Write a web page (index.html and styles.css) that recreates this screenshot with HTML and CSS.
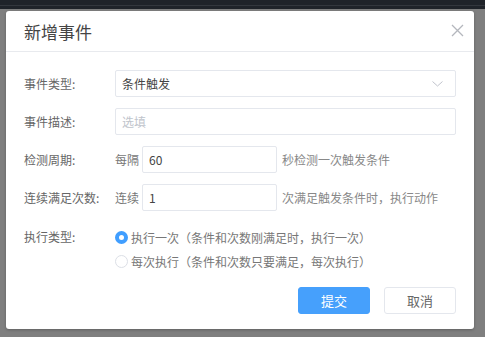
FILE: index.html
```html
<!DOCTYPE html>
<html lang="zh-CN">
<head>
    <meta charset="UTF-8">
    <title>新增事件</title>
    <link rel="stylesheet" href="styles.css">
</head>
<body>
    <div class="topbar"></div>
    <div class="dialog">
        <div class="dialog-header">
            <span class="dialog-title">新增事件</span>
            <span class="dialog-close">
                <svg width="13" height="13" viewBox="0 0 13 13"><path d="M1 1L12 12M12 1L1 12" stroke="#b4b7bd" stroke-width="1.3" fill="none"/></svg>
            </span>
        </div>
        <div class="dialog-body">
            <div class="form-row">
                <label class="form-label">事件类型:</label>
                <div class="form-control">
                    <div class="input select">
                        <span>条件触发</span>
                        <svg width="11" height="6" viewBox="0 0 11 6"><path d="M0.5 0.5L5.5 5L10.5 0.5" stroke="#c0c4cc" stroke-width="1" fill="none"/></svg>
                    </div>
                </div>
            </div>
            <div class="form-row">
                <label class="form-label">事件描述:</label>
                <div class="form-control">
                    <div class="input placeholder">选填</div>
                </div>
            </div>
            <div class="form-row">
                <label class="form-label">检测周期:</label>
                <div class="form-control">
                    <span class="prefix">每隔</span>
                    <div class="input short">60</div>
                    <span class="suffix">秒检测一次触发条件</span>
                </div>
            </div>
            <div class="form-row">
                <label class="form-label">连续满足次数:</label>
                <div class="form-control">
                    <span class="prefix">连续</span>
                    <div class="input short">1</div>
                    <span class="suffix">次满足触发条件时，执行动作</span>
                </div>
            </div>
            <div class="form-row radio-row">
                <label class="form-label">执行类型:</label>
                <div class="radio-group">
                    <div class="radio-item">
                        <span class="radio checked"></span>
                        <span>执行一次（条件和次数刚满足时，执行一次）</span>
                    </div>
                    <div class="radio-item">
                        <span class="radio"></span>
                        <span>每次执行（条件和次数只要满足，每次执行）</span>
                    </div>
                </div>
            </div>
        </div>
        <div class="dialog-footer">
            <button type="button" class="btn btn-primary">提交</button>
            <button type="button" class="btn">取消</button>
        </div>
    </div>
</body>
</html>
```

FILE: styles.css
```css
body {
    margin: 0;
    padding: 0;
    background-color: #7f7f7f;
    font-family: "Noto Sans CJK SC", "Noto Sans", sans-serif;
    font-size: 12px;
    color: #666;
    height: 337px;
    overflow: hidden;
}
.topbar {
    height: 9px;
    background-image: linear-gradient(#1f2329 5px, #33373d 5px, #33373d 6px, #1f2329 6px);
}
.dialog {
    margin: 2px 0 0 6px;
    width: 468px;
    height: 318px;
    background: #fff;
    border-radius: 3px;
    box-shadow: 0 1px 3px rgba(0, 0, 0, 0.25);
    box-sizing: border-box;
    display: flex;
    flex-direction: column;
}
.dialog-header {
    height: 41px;
    border-bottom: 1px solid #e8eaee;
    box-sizing: border-box;
    display: flex;
    align-items: center;
    justify-content: space-between;
    padding: 0 10px 0 18px;
}
.dialog-title {
    font-size: 17px;
    color: #444;
}
.dialog-close {
    display: flex;
    margin-top: -1px;
}
.dialog-body {
    padding: 18px 18px 0 18px;
}
.form-row {
    display: flex;
    align-items: center;
    height: 27px;
    margin-bottom: 11px;
}
.form-label {
    width: 91px;
    flex-shrink: 0;
    color: #666;
}
.form-control {
    flex: 1;
    display: flex;
    align-items: center;
}
.input {
    flex: 1;
    height: 27px;
    border: 1px solid #e4e7ed;
    border-radius: 2px;
    box-sizing: border-box;
    padding: 0 6px;
    display: flex;
    align-items: center;
    color: #444;
}
.input.select {
    justify-content: space-between;
    padding-right: 12px;
}
.input.placeholder {
    color: #c0c4cc;
}
.input.short {
    flex: 0 0 135px;
}
.prefix {
    margin-right: 3px;
    color: #777;
}
.suffix {
    margin-left: 5px;
    color: #888;
}
.radio-row {
    height: auto;
    align-items: flex-start;
    margin-top: 14px;
}
.radio-row .form-label {
    line-height: 24px;
}
.radio-group {
    display: flex;
    flex-direction: column;
}
.radio-item {
    display: flex;
    align-items: center;
    height: 24px;
    color: #777;
}
.radio {
    width: 13px;
    height: 13px;
    border: 1px solid #dcdfe6;
    border-radius: 50%;
    box-sizing: border-box;
    margin-right: 3px;
    background: #fff;
}
.radio.checked {
    border: 4px solid #409eff;
    background: #fff;
}
.dialog-footer {
    margin-top: auto;
    padding: 0 18px 15px 0;
    display: flex;
    justify-content: flex-end;
    gap: 14px;
}
.btn {
    width: 72px;
    height: 27px;
    border: 1px solid #e4e7ed;
    border-radius: 3px;
    background: #fff;
    color: #666;
    font-family: "Noto Sans CJK SC", sans-serif;
    font-size: 13px;
    padding: 0;
    cursor: pointer;
}
.btn-primary {
    background: #46a0fc;
    border-color: #46a0fc;
    color: #fff;
}
```
